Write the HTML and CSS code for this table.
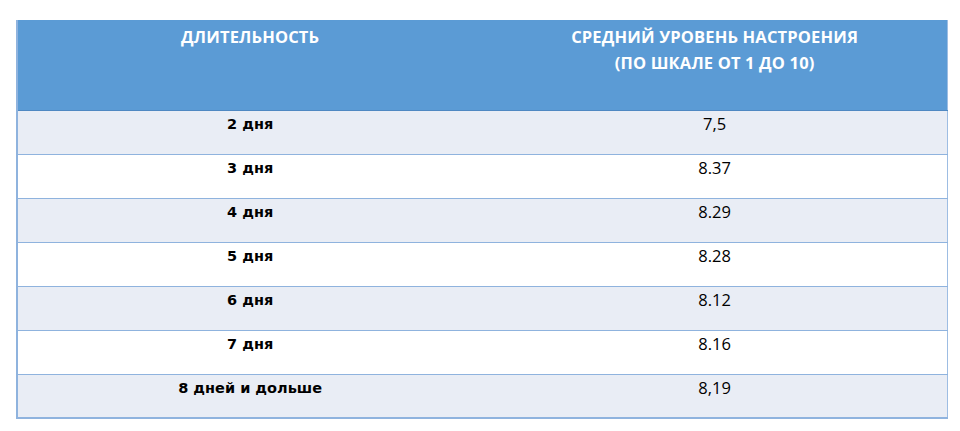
FILE: index.html
```html
<!DOCTYPE html>
<html lang="ru">
<head>
<meta charset="utf-8">
<title>Длительность и настроение</title>
<link rel="stylesheet" href="styles.css">
</head>
<body>
<table class="mood-table">
  <thead>
    <tr>
      <th>ДЛИТЕЛЬНОСТЬ</th>
      <th>СРЕДНИЙ УРОВЕНЬ НАСТРОЕНИЯ<br>(ПО ШКАЛЕ ОТ 1 ДО 10)</th>
    </tr>
  </thead>
  <tbody>
    <tr class="alt"><td class="label">2 дня</td><td class="value">7,5</td></tr>
    <tr><td class="label">3 дня</td><td class="value">8.37</td></tr>
    <tr class="alt"><td class="label">4 дня</td><td class="value">8.29</td></tr>
    <tr><td class="label">5 дня</td><td class="value">8.28</td></tr>
    <tr class="alt"><td class="label">6 дня</td><td class="value">8.12</td></tr>
    <tr><td class="label">7 дня</td><td class="value">8.16</td></tr>
    <tr class="alt"><td class="label">8 дней и дольше</td><td class="value">8,19</td></tr>
  </tbody>
</table>
</body>
</html>
```

FILE: styles.css
```css
html, body {
  margin: 0;
  padding: 0;
  background: #ffffff;
}

body {
  padding: 20px 0 0 16px;
}

.mood-table {
  width: 932px;
  border-collapse: collapse;
  table-layout: fixed;
  border-left: 2px solid #8fb3de;
  border-right: 1px solid #9dbde3;
  border-bottom: 2px solid #8fb3de;
}

.mood-table th {
  background: #5b9bd5;
  color: #ffffff;
  font-family: "Open Sans", "Liberation Sans", sans-serif;
  font-weight: 700;
  font-size: 16.5px;
  letter-spacing: 0.15px;
  line-height: 26px;
  text-align: center;
  vertical-align: top;
  height: 90px;
  padding: 4px 0 0;
  box-sizing: border-box;
  border-bottom: 1px solid #4f88c2;
}

.mood-table td {
  height: 44px;
  padding: 3px 0 0;
  box-sizing: border-box;
  vertical-align: top;
  text-align: center;
  line-height: 20px;
  color: #000000;
  border-bottom: 1px solid #8fb3de;
}

.mood-table tr.alt td {
  background: #e9edf5;
}

.mood-table td.label {
  font-family: "DejaVu Sans", "Liberation Sans", sans-serif;
  font-weight: 700;
  font-size: 14.5px;
}

.mood-table td.value {
  font-family: "Open Sans", "Liberation Sans", sans-serif;
  font-size: 16.5px;
}
```
